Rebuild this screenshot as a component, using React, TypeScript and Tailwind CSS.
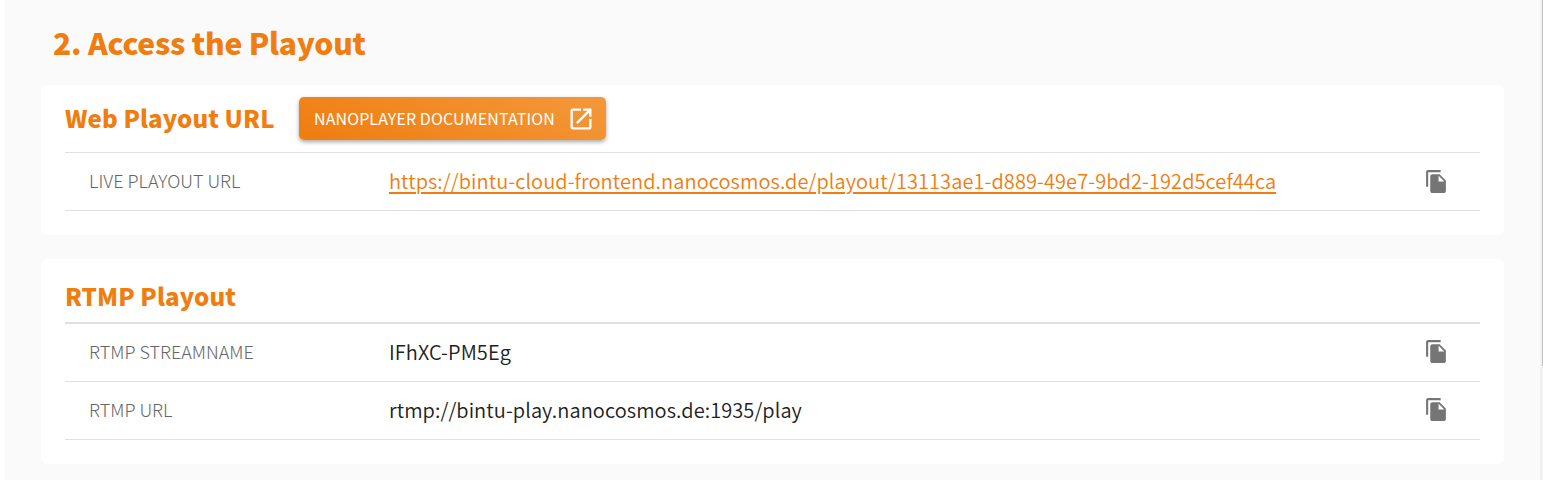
import React from "react";
import { MdFileCopy, MdOpenInNew } from "react-icons/md";

function Row({ label, value, link }: { label: string; value: string; link?: boolean }) {
  return (
    <div className="flex h-[58px] items-center border-b border-[#e0e0e0] pl-6 pr-[31px]">
      <div className="w-[300px] pb-[3px] text-[18px] font-light leading-6 text-[#666]">{label}</div>
      <div className="-mt-0.5 flex-1 text-[20px] font-[350] leading-7 tracking-[0.08px] text-[#212121]">
        {link ? (
          <a href="#" className="text-[#ef7d0f] underline decoration-2 underline-offset-[3px]">{value}</a>
        ) : (
          value
        )}
      </div>
      <MdFileCopy className={link ? "size-[25px] text-[#757575]" : "mb-0.5 size-[25px] text-[#757575]"} />
    </div>
  );
}

export default function App() {
  return (
    <div className="flex h-[480px] overflow-hidden bg-white pl-[5px] font-['Noto_Sans_CJK_SC',sans-serif]">
      <main className="flex-1 bg-[#fafafa] pl-9 pr-9">
        <h1 className="flex h-[85px] items-center pl-3 text-[30px] font-black tracking-[-0.23px] text-[#ef7d0f]">2. Access the Playout</h1>
        <section className="h-[150px] rounded-md bg-white px-6">
          <div className="flex h-[68px] items-center gap-6 border-b border-[#e0e0e0]">
            <h2 className="w-[210px] whitespace-nowrap pb-0.5 text-[24px] font-black tracking-[0.1px] text-[#ef7d0f]">Web Playout URL</h2>
            <button className="flex h-[43px] w-[307px] items-center justify-between rounded-[5px] bg-[linear-gradient(25deg,#ef7d0f,#f4983b)] pl-[15px] pr-[11.5px] text-[16px] tracking-[0.1px] text-white shadow-[0_2px_4px_rgba(0,0,0,0.35)]">
              <span className="-mt-0.5">NANOPLAYER DOCUMENTATION</span>
              <MdOpenInNew className="size-7" />
            </button>
          </div>
          <Row label="LIVE PLAYOUT URL" value="https://bintu-cloud-frontend.nanocosmos.de/playout/13113ae1-d889-49e7-9bd2-192d5cef44ca" link />
        </section>
        <section className="mt-6 h-[205px] rounded-md bg-white px-6">
          <div className="flex h-[65px] items-center border-b-2 border-[#e0e0e0] pt-2.5">
            <h2 className="text-[24px] font-black tracking-[0.1px] text-[#ef7d0f]">RTMP Playout</h2>
          </div>
          <Row label="RTMP STREAMNAME" value="IFhXC-PM5Eg" />
          <Row label="RTMP URL" value="rtmp://bintu-play.nanocosmos.de:1935/play" />
        </section>
      </main>
      <div className="w-[3px] bg-[#f1f1f1] pl-0.5">
        <div className="h-[366px] bg-[#c1c1c1]" />
      </div>
    </div>
  );
}
